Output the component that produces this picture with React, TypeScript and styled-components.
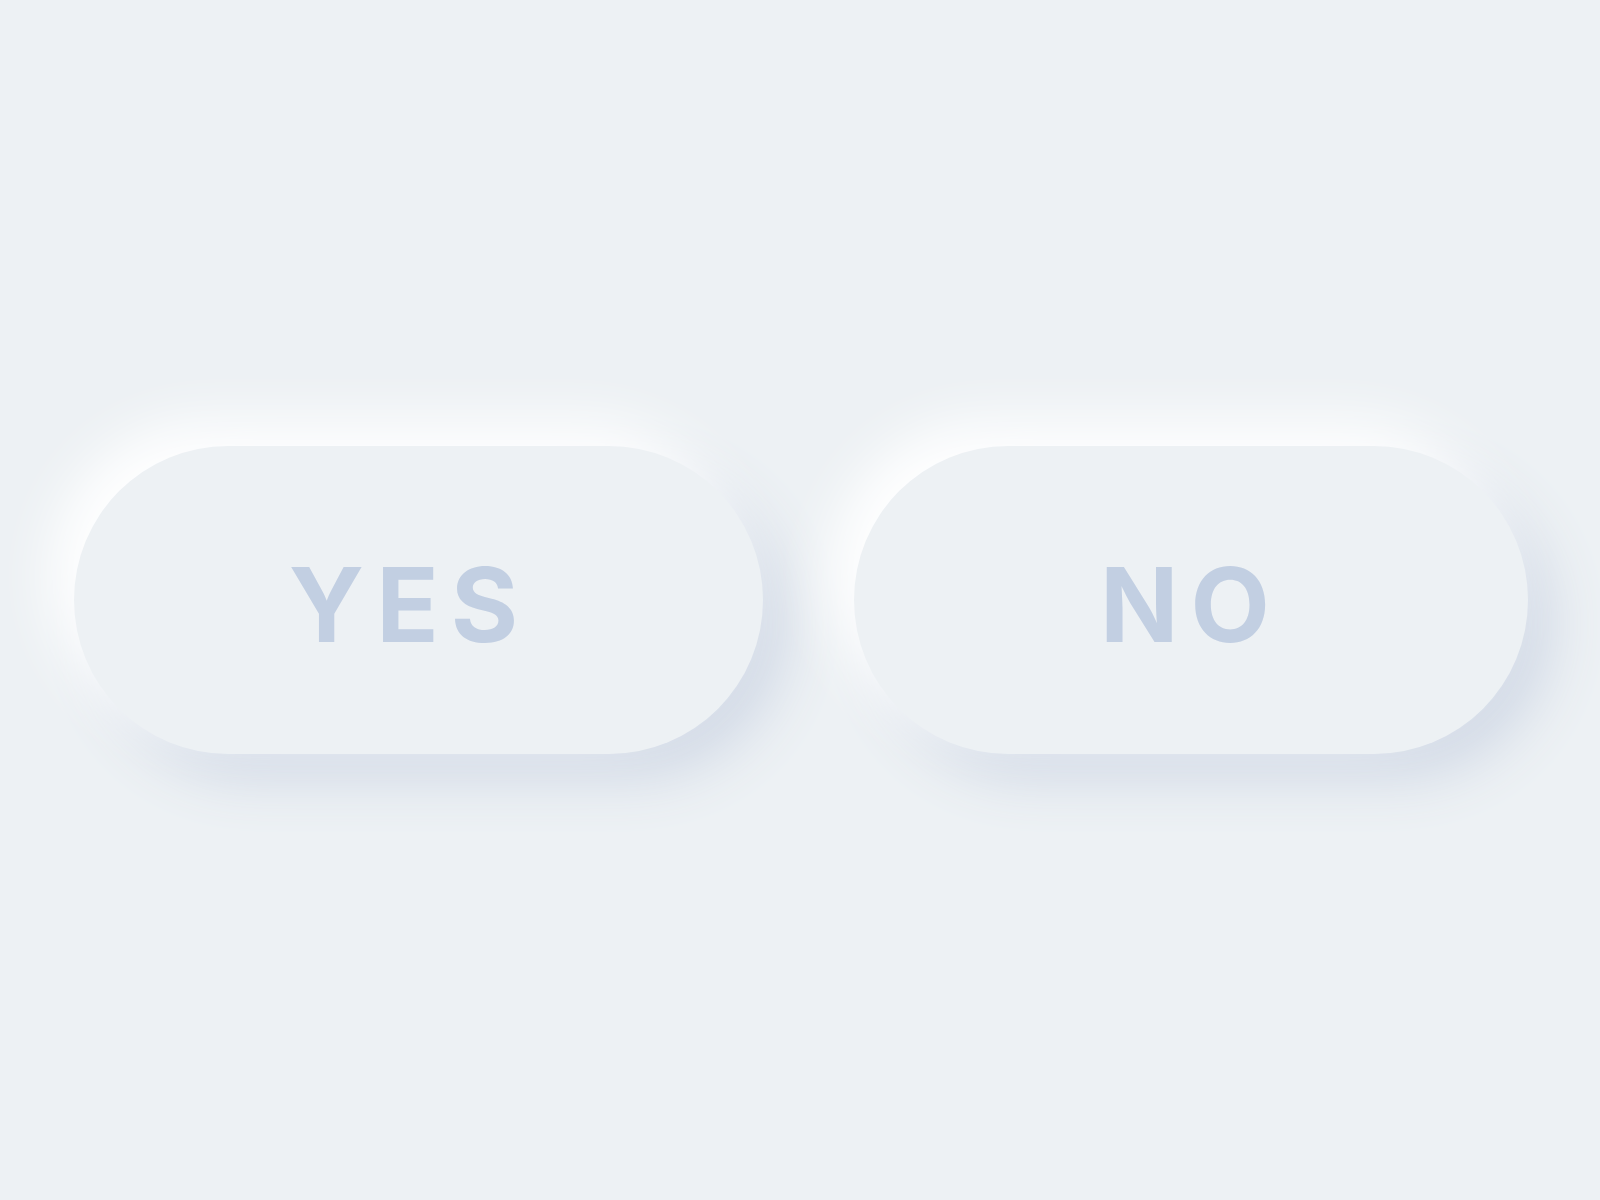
import styled, { createGlobalStyle } from 'styled-components'

const GlobalStyle = createGlobalStyle`
  html, body {
    margin: 0;
    padding: 0;
    background: #edf1f4;
  }
  * { box-sizing: border-box; }
`

const Page = styled.main`
  height: 1200px;
  width: 1600px;
  display: flex;
  align-items: center;
  padding-left: 74px;
  gap: 91px;
  background: #edf1f4;
  overflow: hidden;
`

const PillButton = styled.button<{ $width: number; $shift: number }>`
  width: ${p => p.$width}px;
  height: 308px;
  flex: none;
  border: none;
  border-radius: 154px;
  background: #edf1f4;
  box-shadow: -24px -24px 56px #ffffff, 24px 24px 56px #d1d9e6;
  display: flex;
  align-items: center;
  justify-content: center;
  padding: 9px ${p => p.$shift}px 0 0;
  font-family: Inter, "Liberation Sans", sans-serif;
  font-weight: 700;
  font-size: 103px;
  letter-spacing: 12px;
  color: #c2cfe2;
  cursor: pointer;
`

export default function App() {
  return (
    <>
      <GlobalStyle />
      <Page>
        <PillButton $width={689} $shift={18}>YES</PillButton>
        <PillButton $width={674} $shift={0}>NO</PillButton>
      </Page>
    </>
  )
}
